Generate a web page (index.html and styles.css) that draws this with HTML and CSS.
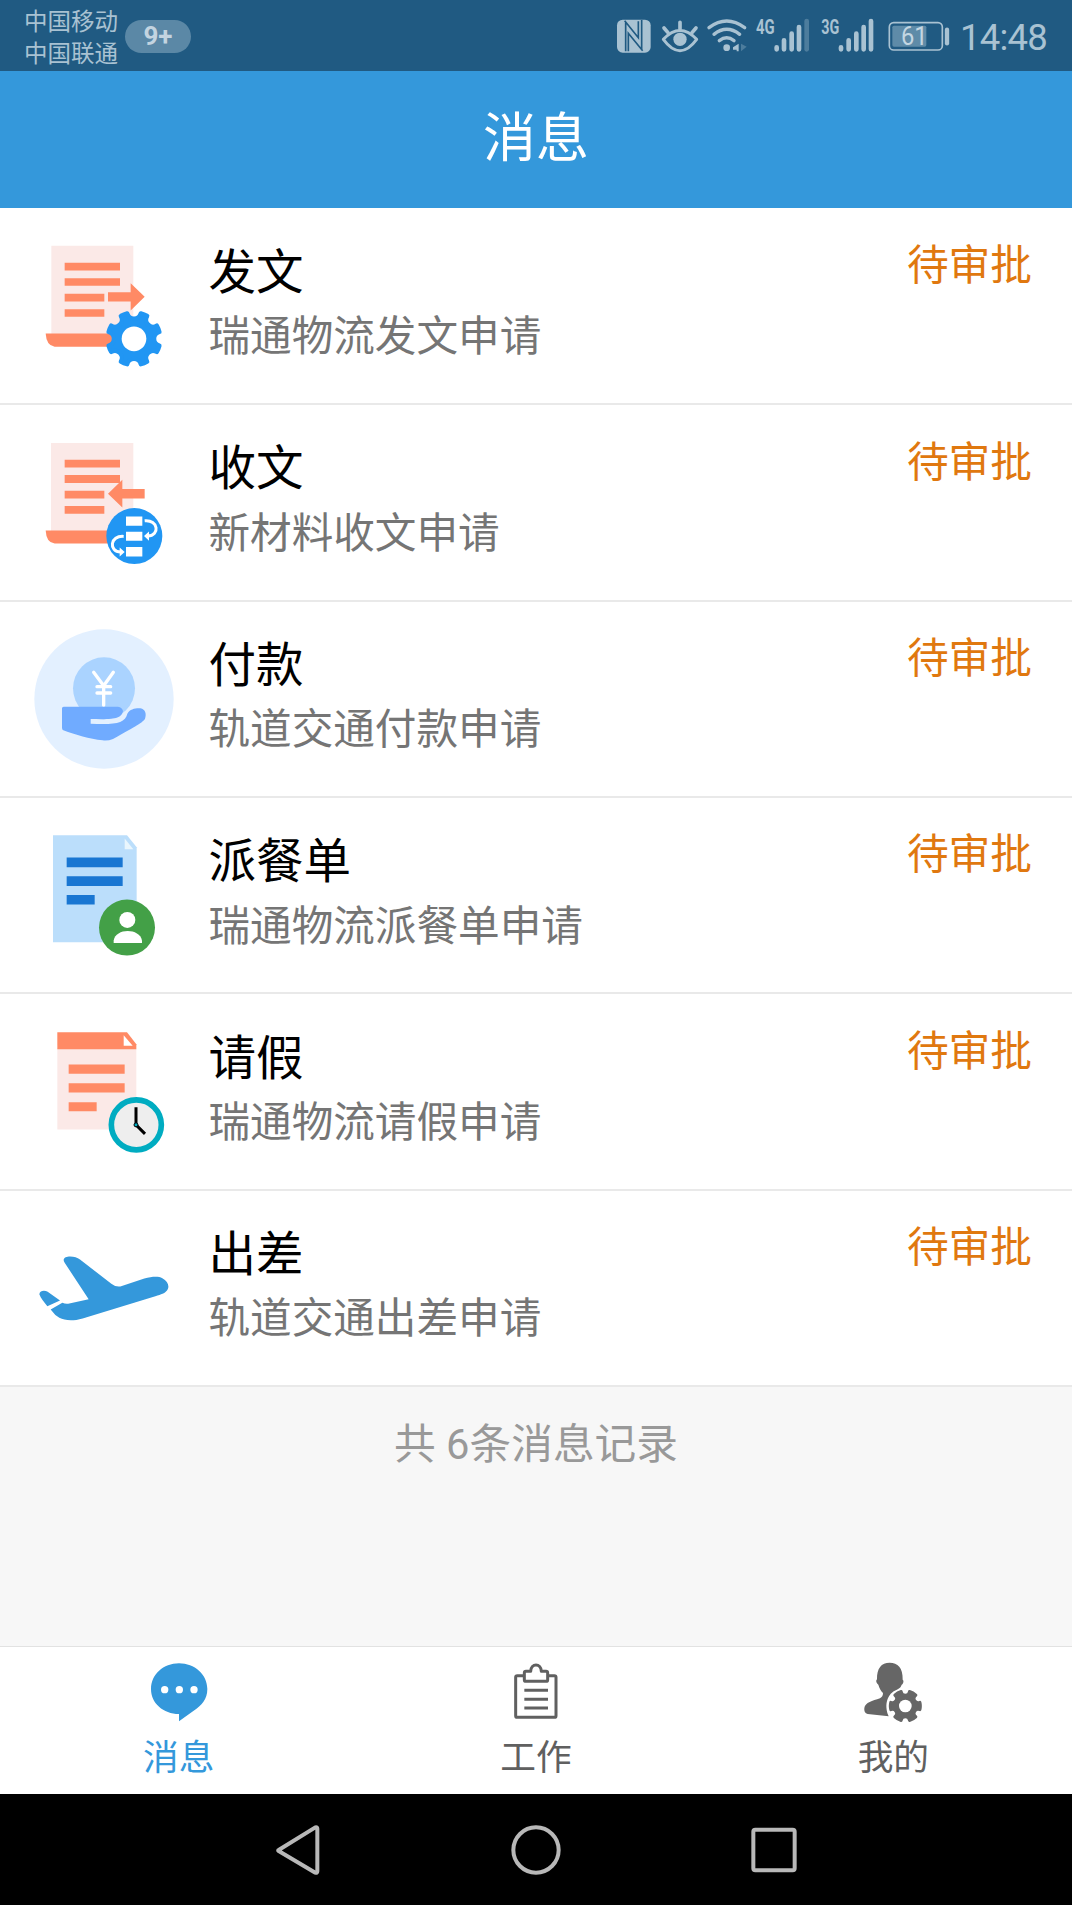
FILE: index.html
```html
<!DOCTYPE html>
<html lang="zh-CN">
<head>
<meta charset="utf-8">
<title>消息</title>
<link rel="stylesheet" href="styles.css">
</head>
<body>
<div class="phone">
  <div class="status">
    <div class="carriers"><span>中国移动</span><span>中国联通</span></div>
    <span class="pill">9+</span>
    <div class="status-icons">
      <svg width="42" height="71" viewBox="45 0 126 213">
        <rect x="51" y="59" width="101" height="99" rx="17" fill="#a9c2d2"/>
        <path d="M74 62L115 113V64M125 60V150M85 154V100L128 152M77 66V154" fill="none" stroke="#205a82" stroke-width="5"/>
      </svg>
      <svg width="46" height="71" viewBox="171 0 138 213" fill="none" stroke="#a9c2d2" stroke-linecap="round">
        <path d="M190 118Q240 65 290 118Q240 186 190 118Z" stroke-width="9" stroke-linejoin="round"/>
        <path d="M240 67V86M192 84L204 98M288 84L276 98" stroke-width="11"/>
        <circle cx="240" cy="118" r="20" fill="#a9c2d2" stroke="none"/>
      </svg>
      <svg width="49" height="71" viewBox="309 0 147 213" fill="none" stroke="#a9c2d2" stroke-width="10" stroke-linecap="round">
        <path d="M327 83Q380 43 434 83M342 103Q380 73 419 103M358 122Q380 105 402 122"/>
        <circle cx="380" cy="143" r="10" fill="#a9c2d2" stroke="none"/>
        <path d="M416 131V154H410V149H399V142Z" fill="#a9c2d2" stroke="none"/>
        <path d="M423 131L440 140L423 154Z" fill="#4d7d9d" stroke="none"/>
      </svg>
      <svg width="63" height="71" viewBox="456 0 189 213" fill="none" stroke="#a9c2d2" stroke-width="14" stroke-linecap="round">
        <text class="net" x="468" y="102" textLength="56" lengthAdjust="spacingAndGlyphs">4G</text>
        <path d="M530 142V148M552 121V148M575 101V148M597 81V148"/>
        <path d="M620 63V148" stroke="#4d7d9d"/>
      </svg>
      <svg width="67" height="71" viewBox="645 0 201 213" fill="none" stroke="#a9c2d2" stroke-width="14" stroke-linecap="round">
        <text class="net" x="664" y="102" textLength="54" lengthAdjust="spacingAndGlyphs">3G</text>
        <path d="M723 142V148M746 121V148M769 101V148M791 81V148M813 63V148"/>
      </svg>
      <svg width="73" height="71" viewBox="846 0 219 213" fill="none" stroke="#a9c2d2">
        <rect x="868" y="68" width="159" height="82" rx="13" stroke-width="5"/>
        <rect x="877" y="77" width="102" height="63" rx="5" fill="#5e8ba8" stroke="none"/>
        <path d="M1041 89V130" stroke-width="13" stroke-linecap="round"/>
        <text class="level" x="903" y="136" textLength="80" lengthAdjust="spacingAndGlyphs">61</text>
      </svg>
    </div>
    <span class="time">14:48</span>
  </div>

  <header class="header"><h1>消息</h1></header>

  <main class="content">
    <ul class="list">
      <li class="row">
        <svg class="icon" viewBox="43 48.6 420 420">
          <path d="M95 78H341V345H95Z" fill="#fbe9e7"/>
          <path d="M78 341H280V381H105Q80 377 78 341Z" fill="#ff8a65"/>
          <path d="M135 129H301V152H135ZM135 175H301V198H135ZM135 222H254V245H135ZM135 268H254V291H135ZM265 217H333V190L375 231L333 272V245H265Z" fill="#ff8a65"/>
          <path transform="translate(343 357)" d="M76.300 20.400A79 79 0 0 1 68.400 39.500A21 21 0 0 0 39.500 68.400A79 79 0 0 1 20.400 76.300A21 21 0 0 0 -20.400 76.300A79 79 0 0 1 -39.500 68.400A21 21 0 0 0 -68.400 39.500A79 79 0 0 1 -76.300 20.400A21 21 0 0 0 -76.300 -20.400A79 79 0 0 1 -68.400 -39.500A21 21 0 0 0 -39.500 -68.400A79 79 0 0 1 -20.400 -76.300A21 21 0 0 0 20.400 -76.300A79 79 0 0 1 39.500 -68.400A21 21 0 0 0 68.400 -39.500A79 79 0 0 1 76.300 -20.400A21 21 0 0 0 76.300 20.400Z" fill="#2196f3" stroke="#2196f3" stroke-width="13" stroke-linejoin="round"/>
          <circle cx="343" cy="357" r="37" fill="#fff"/>
        </svg>
        <div class="text"><h2>发文</h2><p>瑞通物流发文申请</p></div>
        <span class="state">待审批</span>
      </li>
      <li class="row">
        <svg class="icon" viewBox="43 37.800 420 420">
          <path d="M94 68H341V335H94Z" fill="#fbe9e7"/>
          <path d="M78 330H290V369H105Q80 367 78 330Z" fill="#ff8a65"/>
          <path d="M135 118H301V141H135ZM135 164H301V188H135ZM135 211H254V234H135ZM135 257H254V280H135ZM265 220L308 178V206H375V234H308V261Z" fill="#ff8a65"/>
          <circle cx="344" cy="347" r="84" fill="#2196f3"/>
          <path d="M319 288H368V316H319ZM319 334H368V361H319ZM319 380H368V408H319Z" fill="#fff"/>
          <path d="M375 301C416 297 422 345 384 347M312 348C271 345 266 393 303 395" fill="none" stroke="#fff" stroke-width="9"/>
          <path d="M373 347L388 333V361ZM315 395L300 381V408Z" fill="#fff"/>
        </svg>
        <div class="text"><h2>收文</h2><p>新材料收文申请</p></div>
        <span class="state">待审批</span>
      </li>
      <li class="row">
        <svg class="icon" viewBox="43 57 420 420">
          <circle cx="253" cy="267" r="209" fill="#e3f0ff"/>
          <circle cx="253" cy="235" r="93" fill="#aad3ff"/>
          <path d="M222 187L252 227L281 187M252 227V286M232 230H273M232 249H273" fill="none" stroke="#fff" stroke-width="10" stroke-linecap="round" stroke-linejoin="round"/>
          <path d="M132 290H295Q308 292 310 303C305 326 285 329 213 327V341C285 344 316 341 323 311C331 297 348 294 362 295C378 298 381 313 376 326C370 337 351 347 280 387Q265 393 249 391C209 388 168 374 131 361Q127 359 127 353V295Q127 290 132 290Z" fill="#70abff"/>
        </svg>
        <div class="text"><h2>付款</h2><p>轨道交通付款申请</p></div>
        <span class="state">待审批</span>
      </li>
      <li class="row">
        <svg class="icon" viewBox="43 46.200 420 420">
          <path d="M100 77H322L351 113V398H100Z" fill="#bbdefb"/>
          <path d="M315 87L341 119H315Z" fill="#e9f6fd"/>
          <path d="M141 144H309V173H141ZM141 200H309V229H141ZM141 256H225V285H141Z" fill="#1976d2"/>
          <circle cx="322" cy="354" r="84" fill="#43a047"/>
          <circle cx="323" cy="331" r="24" fill="#fff"/>
          <path d="M282 400V393C288 355 360 355 367 393V400Z" fill="#fff"/>
        </svg>
        <div class="text"><h2>派餐单</h2><p>瑞通物流派餐单申请</p></div>
        <span class="state">待审批</span>
      </li>
      <li class="row">
        <svg class="icon" viewBox="43 50.400 420 420">
          <path d="M113 130H350V373H113Z" fill="#fbe9e7"/>
          <path d="M113 81H322L350 117V132H113Z" fill="#ff8a65"/>
          <path d="M312 90L339 122H312Z" fill="#fff"/>
          <path d="M147 178H315V206H147ZM147 234H315V262H147ZM147 291H231V318H147Z" fill="#ff8a65"/>
          <circle cx="350" cy="359" r="75" fill="#eee" stroke="#00acc1" stroke-width="17"/>
          <path d="M349 306V359L376 386" fill="none" stroke="#000" stroke-width="9"/>
          <circle cx="349" cy="359" r="6" fill="#00acc1" stroke="#000" stroke-width="3"/>
        </svg>
        <div class="text"><h2>请假</h2><p>瑞通物流请假申请</p></div>
        <span class="state">待审批</span>
      </li>
      <li class="row">
        <svg class="icon" viewBox="43 39.600 420 420" fill="#3498db">
          <path d="M59 268C61 256 76 256 84 261L121 287L83 304C74 291 63 281 59 268Z"/>
          <path d="M93 314L128 294Q138 298 149 296L207 283L135 174C126 160 139 155 151 155C164 155 173 158 181 164L275 237Q287 247 302 245L374 221C399 214 417 214 428 220C445 228 451 246 442 257C434 267 426 268 407 274L189 341C158 350 135 347 119 339Q106 332 93 314Z"/>
        </svg>
        <div class="text"><h2>出差</h2><p>轨道交通出差申请</p></div>
        <span class="state">待审批</span>
      </li>
    </ul>
    <p class="total">共 6条消息记录</p>
  </main>

  <nav class="tabs">
    <a class="tab active">
      <svg viewBox="147 66 180 180">
        <path d="M237 70C284 70 322 104 322 147C322 178 305 196 281 212L237 244V222C190 222 153 190 153 147C153 104 190 70 237 70Z" fill="#3498db"/>
        <g fill="#fff"><circle cx="194" cy="149" r="11"/><circle cx="238" cy="149" r="11"/><circle cx="282" cy="149" r="11"/></g>
      </svg>
      <span>消息</span>
    </a>
    <a class="tab">
      <svg viewBox="1217 66 180 180" fill="none" stroke="#606060" stroke-width="9" stroke-linejoin="round">
        <path d="M1272 107H1251Q1246 107 1246 112V227Q1246 232 1251 232H1362Q1367 232 1367 227V112Q1367 107 1362 107H1342"/>
        <path d="M1277 94H1291C1292 69 1322 69 1323 94H1337Q1342 94 1342 99V119Q1342 124 1337 124H1277Q1272 124 1272 119V99Q1272 94 1277 94Z"/>
        <path d="M1272 151H1343M1272 178H1343M1272 204H1343"/>
      </svg>
      <span>工作</span>
    </a>
    <a class="tab">
      <svg viewBox="250 66 180 180">
        <path d="M330 68C354 68 370 83 369 119C374 122 370 133 366 134C363 144 358 145 350 150C324 160 312 193 327 229L264 222Q252 219 254 204C257 187 278 183 301 175Q310 170 310 159C304 153 299 145 296 134C289 130 288 121 292 118C291 85 305 68 330 68Z" fill="#666"/>
        <path transform="translate(377 198)" d="M43.700 10.900A12.500 12.500 0 0 0 31.300 32.400A45 45 0 0 1 12.400 43.300A12.500 12.500 0 0 0 -12.400 43.300A45 45 0 0 1 -31.300 32.400A12.500 12.500 0 0 0 -43.700 10.900A45 45 0 0 1 -43.700 -10.900A12.500 12.500 0 0 0 -31.300 -32.400A45 45 0 0 1 -12.400 -43.300A12.500 12.500 0 0 0 12.400 -43.300A45 45 0 0 1 31.300 -32.400A12.500 12.500 0 0 0 43.700 -10.900A45 45 0 0 1 43.700 10.900Z" fill="#666" stroke="#666" stroke-width="9" stroke-linejoin="round"/>
        <circle cx="377" cy="198" r="19" fill="#fff"/>
      </svg>
      <span>我的</span>
    </a>
  </nav>

  <div class="softkeys">
    <svg viewBox="97 103 150 150"><path d="M114 178L224 110Q230 108 230 114V242Q230 248 224 246L114 181Q111 179 114 178Z"/></svg>
    <svg viewBox="0 0 150 150"><circle cx="75" cy="75" r="68"/></svg>
    <svg viewBox="0 0 150 150"><rect x="13" y="14" width="124" height="122" rx="6"/></svg>
  </div>
</div>
</body>
</html>
```
FILE: styles.css
```css
* { box-sizing: border-box; margin: 0; padding: 0; }

body {
  width: 1072px;
  font-family: Roboto, "Noto Sans CJK SC", sans-serif;
  background: #f7f7f7;
}

svg { display: block; flex: none; }

.phone {
  height: 1905px;
  display: flex;
  flex-direction: column;
  overflow: hidden;
}

.status {
  height: 71px;
  flex: none;
  display: flex;
  align-items: center;
  padding: 0 20px 0 24px;
  background: #205a82;
  color: #a9c2d2;
}

.carriers {
  display: flex;
  flex-direction: column;
  width: 101px;
  font-size: 23.500px;
  line-height: 32.500px;
  padding-top: 5px;
}

.pill {
  width: 66px;
  height: 33px;
  margin-top: 2px;
  border-radius: 17px;
  background: #5b88a6;
  color: #c3d4e0;
  font-size: 26px;
  font-weight: 700;
  line-height: 32px;
  text-align: center;
}

.status-icons { display: flex; margin-left: auto; }

.net {
  font-size: 62px;
  font-weight: 700;
  fill: #a9c2d2;
  stroke: none;
}

.level { font-size: 76px; fill: #c3d6e2; stroke: none; }

.time {
  width: 92px;
  margin-left: 5px;
  padding-top: 4px;
  font-size: 36.500px;
  letter-spacing: -0.800px;
  line-height: 42px;
  white-space: nowrap;
}

.header {
  height: 137px;
  flex: none;
  display: flex;
  align-items: center;
  justify-content: center;
  padding-bottom: 1px;
  background: #3498db;
  color: #fff;
}

.header h1 { font-size: 53px; font-weight: 400; line-height: 72px; }

.content { flex: 1; min-height: 0; }

.list { list-style: none; padding-top: 0.800px; background: #fff; }

.row {
  height: 196.400px;
  display: flex;
  align-items: flex-start;
  padding: 27.400px 40px 0 34.300px;
  border-bottom: 2px solid #e9e9e9;
}

.icon { width: 140px; height: 140px; }

.text { flex: 1; margin-left: 34.200px; padding-top: 1.800px; }

.text h2 {
  font-size: 47.500px;
  font-weight: 400;
  line-height: 70px;
  color: #000;
}

.text p { font-size: 41.600px; line-height: 60px; margin-top: -0.500px; color: #757575; }

.state { font-size: 41.700px; line-height: 60px; color: #e0780f; }

.total {
  padding-top: 28px;
  font-size: 41.700px;
  line-height: 60px;
  text-align: center;
  color: #999;
}

.tabs {
  height: 148px;
  flex: none;
  display: grid;
  grid-template-columns: repeat(3, 1fr);
  border-top: 1px solid #e2e2e2;
  background: #fff;
}

.tab {
  display: flex;
  flex-direction: column;
  align-items: center;
  padding-top: 15px;
  font-size: 35.700px;
  line-height: 52px;
  color: #606060;
}

.tab svg { width: 60px; height: 60px; margin-bottom: 10px; }

.active { color: #3498db; }

.softkeys {
  height: 111px;
  flex: none;
  display: flex;
  align-items: center;
  justify-content: center;
  gap: 188px;
  background: #000;
}

.softkeys svg {
  width: 50px;
  height: 50px;
  fill: none;
  stroke: #b8b8b8;
  stroke-width: 12;
  stroke-linejoin: round;
}
```
